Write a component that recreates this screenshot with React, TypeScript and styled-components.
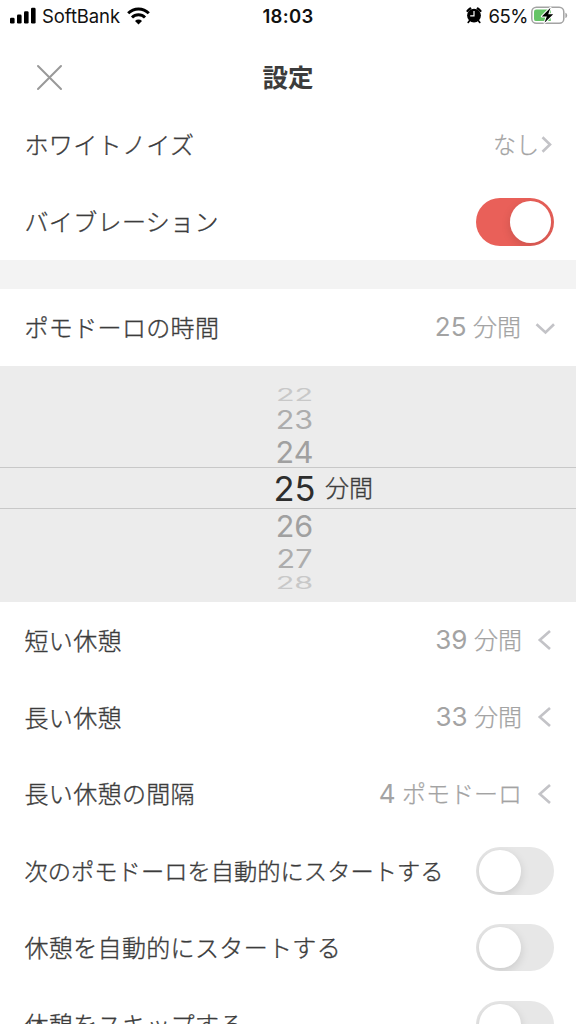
import React from "react";
import styled, { createGlobalStyle } from "styled-components";

const Global = createGlobalStyle`
  * { box-sizing: border-box; }
  html, body { margin: 0; background: #fff; overflow: hidden; }
`;

const Screen = styled.main`
  width: 576px;
  height: 1024px;
  overflow: hidden;
  background: #fff;
  color: #3c3c3c;
  font-family: Inter, "Noto Sans CJK JP", sans-serif;
`;

const StatusBar = styled.header`
  height: 32px;
  display: grid;
  grid-template-columns: 1fr auto 1fr;
  align-items: center;
  padding: 0 8px 0 10px;
  color: #111;
  font-size: 18.5px;
  line-height: 32px;
`;

const StatusGroup = styled.div<{ $end?: boolean }>`
  display: flex;
  align-items: center;
  justify-content: ${(p) => (p.$end ? "flex-end" : "flex-start")};
`;

const Carrier = styled.span`
  margin: 0 7px 0 6px;
  letter-spacing: -0.1px;
`;

const Clock = styled.time`
  font-size: 18.5px;
  font-weight: 600;
  letter-spacing: 0.3px;
  margin-right: 2px;
`;

const Percent = styled.span`
  margin: 0 3px 0 7px;
  font-size: 18.5px;
  letter-spacing: -0.5px;
`;

const TitleBar = styled.div`
  height: 74.6px;
  display: grid;
  grid-template-columns: 100px 1fr 100px;
  align-items: start;
`;

const CloseButton = styled.button`
  border: 0;
  padding: 32px 0 0 36px;
  background: none;
  line-height: 0;
  text-align: left;
`;

const Title = styled.h1`
  margin: 0;
  padding-top: 26px;
  font-size: 25.5px;
  line-height: 40px;
  font-weight: 700;
  text-align: center;
`;

const Row = styled.div`
  height: 76.8px;
  display: flex;
  align-items: center;
  padding: 0 22px 0 24.5px;
`;

const Label = styled.span<{ $compact?: boolean }>`
  flex: 1;
  font-family: "Noto Sans CJK JP", sans-serif;
  font-size: ${(p) => (p.$compact ? 23.25 : 24)}px;
  letter-spacing: ${(p) => (p.$compact ? 0.03 : 0.35)}px;
  font-weight: 300;
  -webkit-text-stroke: 0.35px currentColor;
  line-height: 36px;
  padding-bottom: 1px;
  white-space: nowrap;
`;

const Value = styled.span<{ $gap?: number; $size?: number }>`
  color: #a3a3a3;
  font-size: ${(p) => p.$size ?? 24}px;
  line-height: 36px;
  font-weight: 300;
  -webkit-text-stroke: 0.25px currentColor;
  white-space: nowrap;
  padding-top: 1px;
  margin-right: ${(p) => p.$gap ?? 15}px;
`;

const Digits = styled.span`
  font-size: 26px;
  font-weight: 400;
  margin-right: 6.5px;
  -webkit-text-stroke: 0;
`;

const Switch = styled.span<{ $on?: boolean }>`
  width: 78px;
  height: 47.5px;
  flex: none;
  display: flex;
  align-items: center;
  justify-content: ${(p) => (p.$on ? "flex-end" : "flex-start")};
  padding: 0 3px;
  border-radius: 24px;
  overflow: hidden;
  background: ${(p) => (p.$on ? "#e96059" : "#e7e7e7")};
`;

const Knob = styled.span`
  width: 41.5px;
  height: 41.5px;
  border-radius: 50%;
  background: #fff;
  box-shadow: 0 3px 10px rgba(0, 0, 0, 0.13);
`;

const Divider = styled.div`
  height: 28.6px;
  background: #f3f3f3;
`;

const Picker = styled.div`
  height: 236.4px;
  padding-top: 20.4px;
  background: #ececec;
`;

const PickerRow = styled.div<{ $height: number; $active?: boolean }>`
  height: ${(p) => p.$height}px;
  display: grid;
  grid-template-columns: 272px 45px 1fr;
  grid-template-rows: 100%;
  align-items: center;
  border: solid #c8c8c8;
  border-width: ${(p) => (p.$active ? "1px 0" : "0")};
`;

const PickerNumber = styled.span<{ $size: number; $squash: number; $color: string; $box: number }>`
  grid-column: 2;
  justify-self: center;
  font-size: ${(p) => p.$size}px;
  line-height: ${(p) => p.$box}px;
  color: ${(p) => p.$color};
  transform: translateY(0.7px) scaleY(${(p) => p.$squash});
`;

const PickerUnit = styled.span`
  padding: 2px 0 0 8px;
  font-size: 24px;
  line-height: 36px;
  font-weight: 300;
  -webkit-text-stroke: 0.35px currentColor;
`;

const Signal = () => (
  <svg width="26" height="18" viewBox="0 0 26 18" fill="#000">
    <rect x="0" y="10.8" width="4.6" height="5.8" rx="1.3" />
    <rect x="7" y="7.6" width="4.6" height="9" rx="1.3" />
    <rect x="14" y="4.2" width="4.6" height="12.4" rx="1.3" />
    <rect x="21" y="0.8" width="4.6" height="15.8" rx="1.3" />
  </svg>
);

const Wifi = () => (
  <svg width="23" height="18" viewBox="0 0 23 18" fill="none" stroke="#000" strokeWidth="3">
    <path d="M1.2 6.2a14.6 14.6 0 0 1 20.600 0" />
    <path d="M5 10.500a9.200 9.200 0 0 1 13 0" />
    <path d="M8 14a5 5 0 0 1 7 0L11.500 17.500z" fill="#000" stroke="none" />
  </svg>
);

const Alarm = () => (
  <svg width="16" height="18" viewBox="0 0 16 18">
    <circle cx="8" cy="8.6" r="6.9" fill="#000" />
    <path d="M1.5 4A13 13 0 0 1 4.300 1.500M14.500 4a13 13 0 0 0-2.800-2.500" stroke="#000" strokeWidth="2.200" fill="none" strokeLinecap="round" />
    <path d="M3.500 13.700 2.200 15.400M12.500 13.700l1.300 1.700" stroke="#000" strokeWidth="1.700" strokeLinecap="round" />
    <path d="M8 4v4.800H4.200" stroke="#fff" strokeWidth="1.200" fill="none" />
  </svg>
);

const Battery = () => (
  <svg width="37" height="20" viewBox="0 0 37 20">
    <rect x="0.8" y="1.3" width="32" height="16" rx="4.6" fill="#fff" stroke="#a3a3a3" strokeWidth="1.5" />
    <path d="M34.4 6.700c2.400 1 2.400 4.400 0 5.400z" fill="#a3a3a3" />
    <path d="M5.200 3.500h14.600v11.600H5.200A2.200 2.200 0 0 1 3 12.900V5.700A2.200 2.200 0 0 1 5.200 3.500z" fill="#65c466" />
    <path d="M19.500 1.700 10.800 10.400h5l-2.300 6.400 8.700-8.600h-5z" fill="#000" stroke="#fff" strokeWidth="2" paintOrder="stroke" strokeLinejoin="round" />
  </svg>
);

const chevrons = {
  right: { w: 14, h: 20, d: "M2.500 2.300l7.500 7.200-7.500 7.200" },
  left: { w: 17, h: 20, d: "M13 1 2.800 10 13 19" },
  down: { w: 20, h: 16, d: "M2.500 5.300 11.500 13.500 20 5.300" },
};

const Chevron = ({ to }: { to: keyof typeof chevrons }) => {
  const c = chevrons[to];
  return (
    <svg width={c.w} height={c.h} viewBox={`0 0 ${c.w} ${c.h}`} fill="none" stroke="#c3c3c7" strokeWidth="2.600" overflow="visible">
      <path d={c.d} />
    </svg>
  );
};

const Toggle = ({ on }: { on?: boolean }) => (
  <Switch $on={on} role="switch" aria-checked={!!on}>
    <Knob />
  </Switch>
);

const wheel = [
  { n: 22, height: 16, size: 30.5, squash: 0.55, color: "#c8c8c8" },
  { n: 23, height: 34, size: 30.5, squash: 0.82, color: "#adadad" },
  { n: 24, height: 31, size: 30.5, squash: 0.98, color: "#a0a0a0" },
  { n: 25, height: 42, size: 34.5, squash: 1, color: "#2d2d2d" },
  { n: 26, height: 33, size: 30.5, squash: 0.98, color: "#a0a0a0" },
  { n: 27, height: 32, size: 30.5, squash: 0.82, color: "#adadad" },
  { n: 28, height: 16, size: 30.5, squash: 0.55, color: "#c8c8c8" },
];

const durations = [
  { label: "短い休憩", digits: "39", unit: "分間" },
  { label: "長い休憩", digits: "33", unit: "分間" },
  { label: "長い休憩の間隔", digits: "4", unit: "ポモドーロ" },
];

export default function App() {
  return (
    <Screen>
      <Global />
      <StatusBar>
        <StatusGroup>
          <Signal />
          <Carrier>SoftBank</Carrier>
          <Wifi />
        </StatusGroup>
        <Clock>18:03</Clock>
        <StatusGroup $end>
          <Alarm />
          <Percent>65%</Percent>
          <Battery />
        </StatusGroup>
      </StatusBar>
      <TitleBar>
        <CloseButton aria-label="閉じる">
          <svg width="27" height="27" viewBox="0 0 27 27" stroke="#999" strokeWidth="2" strokeLinecap="round">
            <path d="M2 2l23 23M25 2 2 25" />
          </svg>
        </CloseButton>
        <Title>設定</Title>
      </TitleBar>
      <Row>
        <Label>ホワイトノイズ</Label>
        <Value $gap={1} $size={23}>なし</Value>
        <Chevron to="right" />
      </Row>
      <Row>
        <Label>バイブレーション</Label>
        <Toggle on />
      </Row>
      <Divider />
      <Row>
        <Label>ポモドーロの時間</Label>
        <Value $gap={13}>
          <Digits>25</Digits>分間
        </Value>
        <Chevron to="down" />
      </Row>
      <Picker>
        {wheel.map((w) => (
          <PickerRow key={w.n} $height={w.height} $active={w.n === 25}>
            <PickerNumber $size={w.size} $squash={w.squash} $color={w.color} $box={w.height / w.squash}>
              {w.n}
            </PickerNumber>
            {w.n === 25 && <PickerUnit>分間</PickerUnit>}
          </PickerRow>
        ))}
      </Picker>
      {durations.map((d) => (
        <Row key={d.label}>
          <Label>{d.label}</Label>
          <Value>
            <Digits>{d.digits}</Digits>
            {d.unit}
          </Value>
          <Chevron to="left" />
        </Row>
      ))}
      <Row>
        <Label $compact>次のポモドーロを自動的にスタートする</Label>
        <Toggle />
      </Row>
      <Row>
        <Label>休憩を自動的にスタートする</Label>
        <Toggle />
      </Row>
      <Row>
        <Label>休憩をスキップする</Label>
        <Toggle />
      </Row>
    </Screen>
  );
}
